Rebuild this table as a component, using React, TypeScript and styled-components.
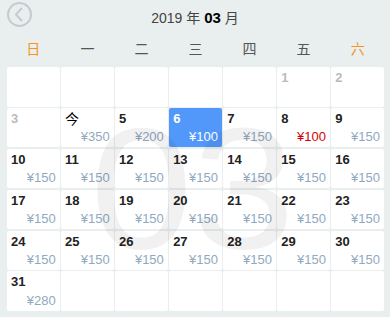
import styled, { createGlobalStyle } from "styled-components";

const GlobalStyle = createGlobalStyle`
  html, body {
    margin: 0;
    padding: 0;
    background: #e9eeee;
    font-family: "Liberation Sans", Arial, "Noto Sans CJK SC", sans-serif;
  }
`;

type Day = {
    label: string;
    price?: string;
    disabled?: boolean;
    today?: boolean;
    selected?: boolean;
    special?: boolean;
};

const PageBox = styled.div`
  width: 390px;
  height: 317px;
  background: #e9eeee;
  overflow: hidden;
`;

const HeaderBox = styled.div`
  position: relative;
  height: 34px;
  display: flex;
  align-items: center;
  justify-content: center;
`;

const BackButton = styled.button`
  position: absolute;
  left: 6px;
  top: 1px;
  width: 27px;
  height: 27px;
  padding: 0;
  border: none;
  background: transparent;
  cursor: pointer;
  display: flex;
`;

const Title = styled.div`
  font-size: 14px;
  color: #444;
  padding-bottom: 1px;

  b {
    color: #000;
    font-size: 15px;
  }
`;

const WeekRow = styled.div`
  display: grid;
  grid-template-columns: repeat(7, 1fr);
  column-gap: 1.3px;
  padding: 0 6px 0 7px;
  height: 32px;
  align-items: center;
`;

const WeekLabel = styled.div<{ $weekend?: boolean }>`
  text-align: center;
  font-size: 14px;
  color: ${({ $weekend }) => ($weekend ? "#f7931e" : "#555")};
  padding-bottom: 4px;
`;

const GridWrap = styled.div`
  position: relative;
  margin: 1px 6px 0 7px;
`;

const DayGrid = styled.div`
  display: grid;
  grid-template-columns: repeat(7, 1fr);
  grid-auto-rows: 39.6px;
  gap: 1.3px;
`;

const Cell = styled.div<{ $selected?: boolean }>`
  background: ${({ $selected }) => ($selected ? "#5198fa" : "#fff")};
  border-radius: 2px;
  display: flex;
  flex-direction: column;
  justify-content: space-between;
  padding: 3px 4px 2px 4px;
  box-sizing: border-box;
`;

const DayNum = styled.div<{ $disabled?: boolean; $today?: boolean; $selected?: boolean }>`
  font-size: ${({ $today }) => ($today ? "14px" : "13px")};
  font-weight: ${({ $today }) => ($today ? "normal" : "bold")};
  line-height: 16px;
  color: ${({ $disabled, $selected, $today }) =>
        $selected ? "#fff" : $disabled ? "#bbb" : $today ? "#000" : "#222"};
`;

const Price = styled.div<{ $selected?: boolean; $special?: boolean }>`
  text-align: right;
  font-size: 13px;
  line-height: 16px;
  color: ${({ $selected, $special }) =>
        $selected ? "#fff" : $special ? "#d40000" : "#90a9c0"};
`;

const Watermark = styled.div`
  position: absolute;
  left: -6px;
  right: 0;
  top: 35px;
  text-align: center;
  font-size: 172px;
  line-height: 172px;
  color: rgba(0, 0, 0, 0.055);
  pointer-events: none;
  transform: scaleX(1.07);
`;

const weekNames = ["日", "一", "二", "三", "四", "五", "六"];

const buildDays = (): (Day | null)[] => {
    const days: (Day | null)[] = [null, null, null, null, null];
    days.push({ label: "1", disabled: true });
    days.push({ label: "2", disabled: true });
    days.push({ label: "3", disabled: true });
    days.push({ label: "今", today: true, price: "¥350" });
    days.push({ label: "5", price: "¥200" });
    days.push({ label: "6", price: "¥100", selected: true });
    days.push({ label: "7", price: "¥150" });
    days.push({ label: "8", price: "¥100", special: true });
    for (let d = 9; d <= 30; d++) days.push({ label: String(d), price: "¥150" });
    days.push({ label: "31", price: "¥280" });
    while (days.length < 42) days.push(null);
    return days;
};

const App = () => {
    const days = buildDays();

    return (
        <PageBox>
            <GlobalStyle />
            <HeaderBox>
                <BackButton>
                    <svg width="27" height="27" viewBox="0 0 27 27">
                        <circle cx="13.5" cy="13.5" r="11.5" fill="none" stroke="#c6cbcf" strokeWidth="2" />
                        <path d="M15.5 7.5 L10 13.5 L15.5 19.5" fill="none" stroke="#c6cbcf" strokeWidth="2" strokeLinecap="round" strokeLinejoin="round" />
                    </svg>
                </BackButton>
                <Title>
                    2019 年 <b>03</b> 月
                </Title>
            </HeaderBox>
            <WeekRow>
                {weekNames.map((name, i) => (
                    <WeekLabel key={name} $weekend={i === 0 || i === 6}>
                        {name}
                    </WeekLabel>
                ))}
            </WeekRow>
            <GridWrap>
                <DayGrid>
                    {days.map((day, i) =>
                        day ? (
                            <Cell key={i} $selected={day.selected}>
                                <DayNum $disabled={day.disabled} $today={day.today} $selected={day.selected}>
                                    {day.label}
                                </DayNum>
                                {day.price && (
                                    <Price $selected={day.selected} $special={day.special}>
                                        {day.price}
                                    </Price>
                                )}
                            </Cell>
                        ) : (
                            <Cell key={i} />
                        )
                    )}
                </DayGrid>
                <Watermark>03</Watermark>
            </GridWrap>
        </PageBox>
    );
};

export default App;
